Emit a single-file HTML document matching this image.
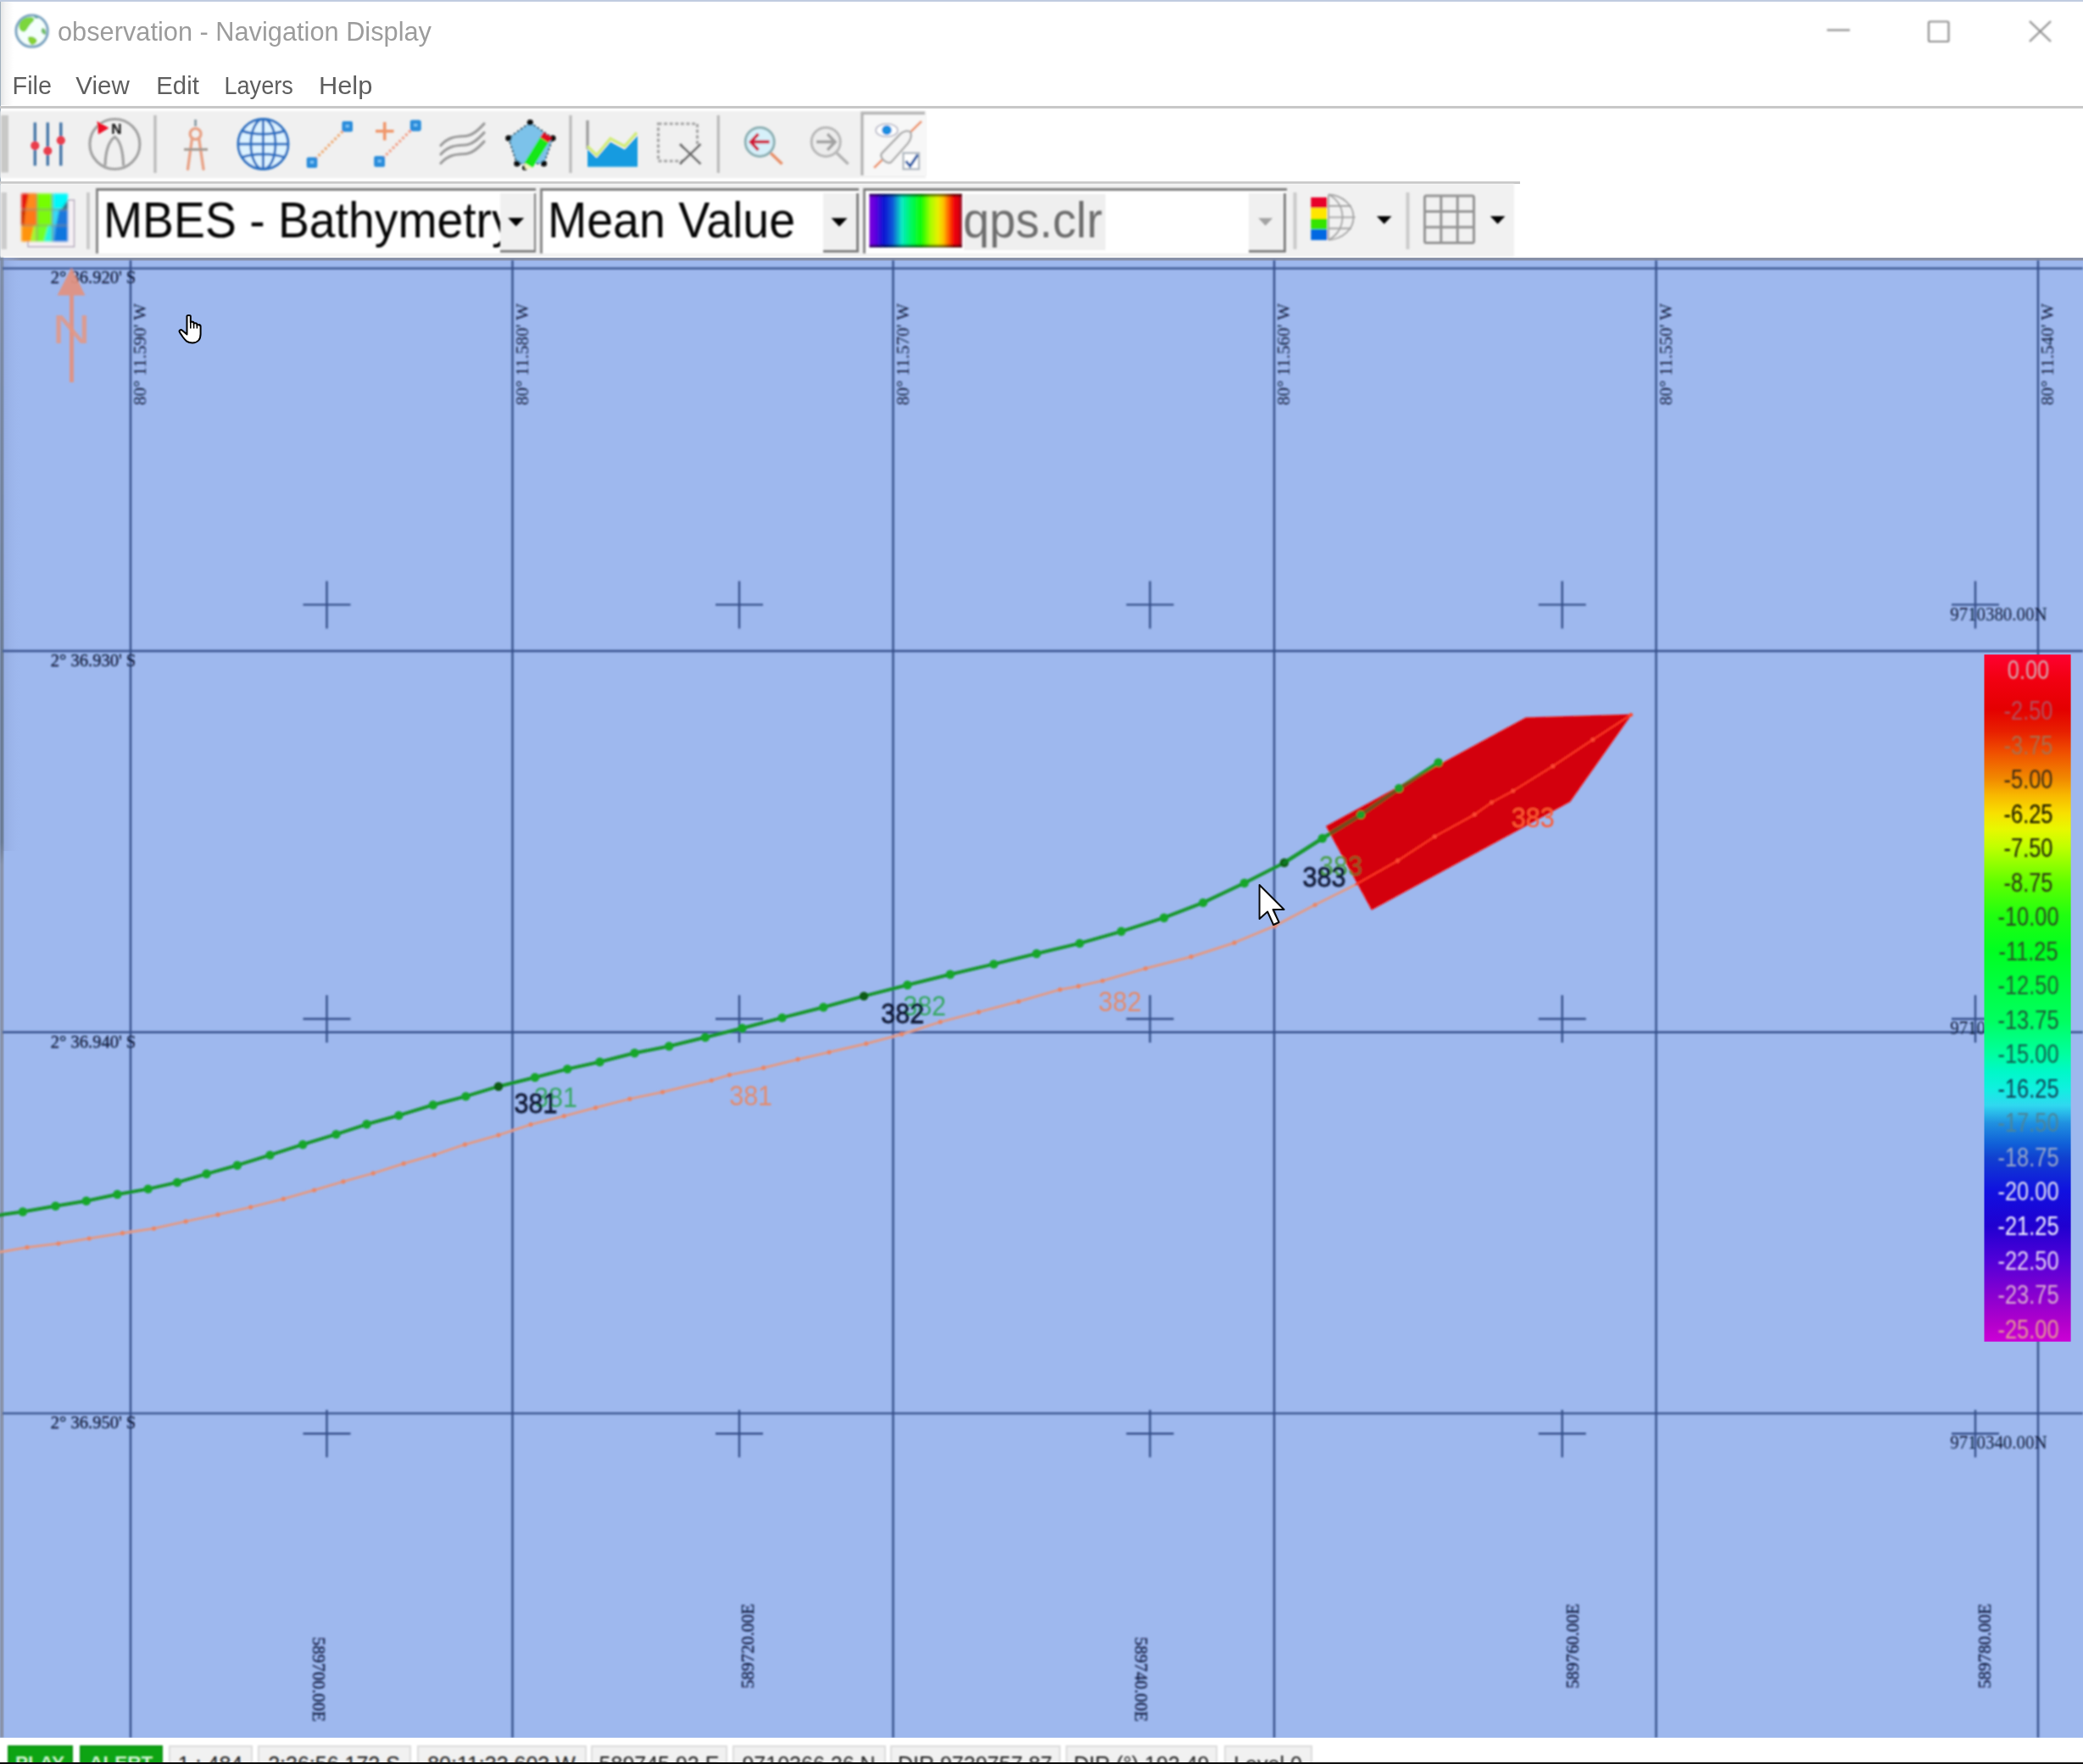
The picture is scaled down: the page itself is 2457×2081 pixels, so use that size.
<!DOCTYPE html>
<html lang="en"><head><meta charset="utf-8"><title>observation - Navigation Display</title>
<style>
html,body{margin:0;padding:0;background:#fff;}
body{width:2457px;height:2081px;font-family:"Liberation Sans",sans-serif;}
#root{position:relative;width:2457px;height:2081px;overflow:hidden;background:#fff;}
.abs{position:absolute;}
svg.map{position:absolute;left:0;top:0;}
svg.icons{position:absolute;left:0;top:0;}
.t{position:absolute;white-space:nowrap;line-height:1;}
.blur{filter:blur(0.8px);}
.tb{position:absolute;background:#f0f0f0;}
.hl{position:absolute;background:#c8c8c8;}
.dd{position:absolute;top:221.5px;height:77px;background:#fff;box-sizing:border-box;border-top:3.4px solid #7c7c7c;border-left:3.4px solid #888;overflow:hidden;}
.dd .btn{position:absolute;top:3px;height:67.5px;background:#f0f0f0;border-right:3.2px solid #808080;border-bottom:3.2px solid #808080;}
.dd .tx{position:absolute;left:6px;top:5.9px;font-size:60px;line-height:1;color:#050505;white-space:nowrap;transform:scaleX(0.922);transform-origin:0 0;}
.sb{position:absolute;left:0;top:2050px;width:2457px;height:31px;background:#fff;overflow:hidden;}
.cell{position:absolute;top:8.6px;height:30px;box-sizing:border-box;background:#f1f1f1;border:2px solid #dcdcdc;font-size:25px;line-height:41px;text-align:center;color:#1c1c1c;overflow:hidden;white-space:nowrap;}
.cell.g{top:9.3px;background:#0da413;border-color:#0a9410;color:#d0f2d0;font-weight:bold;font-size:22.5px;line-height:37px;}
</style></head><body><div id="root">
<div class="abs" style="left:0;top:0;width:16px;height:124px;background:linear-gradient(90deg,#e2e4e4,#f4f4f4 40%,#ffffff)"></div>
<div class="abs" style="left:0;top:0;width:1.3px;height:305px;background:#9eaebc"></div>
<div class="abs" style="left:0;top:0;width:2457px;height:1.5px;background:#c0cce0"></div>
<div class="hl" style="left:0;top:124.5px;width:2457px;height:3px;"></div>
<div class="tb blur" style="left:0;top:130.5px;width:1092px;height:79px;"></div>
<div class="hl" style="left:0;top:213.8px;width:1793px;height:3px;"></div>
<div class="tb blur" style="left:0;top:217.2px;width:1786px;height:86px;background:#f1f1f1"></div>
<svg class="icons" width="2457" height="130" viewBox="0 0 2457 130" style="filter:blur(0.7px)">
<text x="68" y="47.6" font-family="'Liberation Sans', sans-serif" font-size="30.5" fill="#9c9c9c" textLength="441" lengthAdjust="spacingAndGlyphs">observation - Navigation Display</text>
<g font-family="'Liberation Sans', sans-serif" font-size="29" fill="#5e5e5e">
<text x="14.5" y="111" textLength="46.5" lengthAdjust="spacingAndGlyphs">File</text>
<text x="89.3" y="111" textLength="63.5" lengthAdjust="spacingAndGlyphs">View</text>
<text x="184.3" y="111" textLength="50.5" lengthAdjust="spacingAndGlyphs">Edit</text>
<text x="264.4" y="111" textLength="81.5" lengthAdjust="spacingAndGlyphs">Layers</text>
<text x="375.9" y="111" textLength="63.5" lengthAdjust="spacingAndGlyphs">Help</text>
</g></svg>
<div class="dd blur" style="left:113.3px;width:519px;"><div class="tx" style="">MBES - Bathymetry</div><div class="btn" style="left:473.5px;width:40px;"></div></div>
<div class="dd blur" style="left:637px;width:376px;"><div class="tx" style="transform:scaleX(0.925)">Mean Value</div><div class="btn" style="left:331px;width:38.5px;"></div></div>
<div class="dd blur" style="left:1018px;width:499.5px;"><div class="abs" style="left:116px;top:4px;width:167px;height:66px;background:#efefef"></div><div class="tx" style="left:114.5px;color:#6e6e6e;transform:scaleX(0.93)">qps.clr</div><div class="btn" style="left:452px;width:41px;"></div></div>
<svg class="icons" width="2457" height="310" viewBox="0 0 2457 310">
<defs>
<linearGradient id="sw" x1="0" y1="0" x2="1" y2="0">
<stop offset="0" stop-color="#7a00d8"/>
<stop offset="0.06" stop-color="#6200e0"/>
<stop offset="0.16" stop-color="#0a18d2"/>
<stop offset="0.25" stop-color="#0a58d8"/>
<stop offset="0.35" stop-color="#08eac4"/>
<stop offset="0.45" stop-color="#00f860"/>
<stop offset="0.56" stop-color="#10fc08"/>
<stop offset="0.66" stop-color="#a8fc00"/>
<stop offset="0.74" stop-color="#e8f000"/>
<stop offset="0.8" stop-color="#ffc000"/>
<stop offset="0.86" stop-color="#ff5800"/>
<stop offset="0.91" stop-color="#f40808"/>
<stop offset="0.96" stop-color="#dc0010"/>
<stop offset="1" stop-color="#8a1030"/>
</linearGradient>
<linearGradient id="swv" x1="0" y1="0" x2="0" y2="1"><stop offset="0" stop-color="#000" stop-opacity="0.75"/><stop offset="0.07" stop-color="#000" stop-opacity="0"/><stop offset="0.93" stop-color="#000" stop-opacity="0"/><stop offset="1" stop-color="#000" stop-opacity="0.75"/></linearGradient>
<linearGradient id="cg" x1="0" y1="0" x2="1" y2="0.25"><stop offset="0" stop-color="#f01800"/><stop offset="0.16" stop-color="#ff7a00"/><stop offset="0.3" stop-color="#b0f000"/><stop offset="0.45" stop-color="#60ff00"/><stop offset="0.62" stop-color="#20f0c0"/><stop offset="0.75" stop-color="#10c8f0"/><stop offset="0.88" stop-color="#1070e0"/><stop offset="1" stop-color="#1060d0"/></linearGradient>
<filter id="s2" x="-10%" y="-10%" width="120%" height="120%"><feGaussianBlur stdDeviation="0.8"/></filter>
<filter id="s3" x="-10%" y="-10%" width="120%" height="120%"><feGaussianBlur stdDeviation="1.3"/></filter>
</defs>
<g filter="url(#s2)">
<circle cx="37.6" cy="36.6" r="18.6" fill="#f4fffc" stroke="#7ea6c2" stroke-width="3.2"/>
<path d="M22.5 30 C23.5 23.5 30 19.5 37.5 20.5 C41 21 41 24 38.5 26 C35.5 28.5 33.5 31.5 31.5 35 C30 37.5 27.5 38.5 25 36.5 C23 35 22.3 32.5 22.5 30 Z" fill="#7cd63e"/>
<path d="M33 44 C36 42 41 43.5 43.5 47 C44 50 41 52.5 37.5 53 C34.5 51 32.5 47.5 33 44 Z" fill="#86d236"/>
<path d="M49.5 33 C53 33 55 36.5 54 40.5 C52 41.5 49 39.5 48.5 36.5 Z" fill="#74c070"/>
<path d="M39.5 19.5 C42.5 18.5 45 20 45 21.5 C43.5 22.5 41 22 39.5 19.5 Z" fill="#5aa896"/>
<g stroke="#8e8e8e" stroke-width="2.2" fill="none">
<path d="M2155 35.5H2182"/>
<rect x="2275" y="25.5" width="23.5" height="23.5" rx="1.5"/>
<path d="M2394 25 L2419 49 M2419 25 L2394 49"/>
</g>
<rect x="1.3" y="136" width="8.6" height="67.5" fill="#c8c8c6"/>
<rect x="1.5" y="227" width="6.5" height="67" fill="#cccccc"/>
<rect x="181.4" y="136" width="3.2" height="68" fill="#b9b9b9"/>
<rect x="671.4" y="136" width="3.2" height="68" fill="#b9b9b9"/>
<rect x="845.6999999999999" y="136" width="3.2" height="68" fill="#b9b9b9"/>
<g stroke="#4677a8" stroke-width="3.5" fill="none"><path d="M41.3 144.5V195.5M56.3 144.5V195.5M71.8 144.5V195.5"/></g>
<g fill="#ea3c4c"><circle cx="41.3" cy="171.8" r="5.1"/><circle cx="56.3" cy="178" r="5.1"/><circle cx="71.8" cy="165.6" r="5.1"/></g>
<circle cx="135.4" cy="170" r="29.5" fill="none" stroke="#a2a2a2" stroke-width="3.2"/>
<path d="M124 195.5 C124.5 176 129 166 135.4 161.5 C142 166 145 176 145.6 195.5" fill="none" stroke="#a2a2a2" stroke-width="3.2"/>
<path d="M114.5 143 L128.5 151 L116 158.5 Z" fill="#ee1028"/>
<text x="137.5" y="158" text-anchor="middle" font-family="'Liberation Sans', sans-serif" font-weight="bold" font-size="17" fill="#0a0a0a">N</text>
<path d="M230.6 141V149" stroke="#8fa0a8" stroke-width="3" fill="none"/>
<g stroke="#e8a286" stroke-width="3.4" fill="none" stroke-linecap="round" stroke-linejoin="round"><circle cx="230.6" cy="158" r="6.4"/><path d="M226.5 163.5 L221.5 199.5 M234.7 163.5 L240 199.5"/></g>
<path d="M217 176.3H245" stroke="#a39a92" stroke-width="3" fill="none"/>
<g stroke="#2f72c2" stroke-width="3" fill="none"><circle cx="310.4" cy="170" r="29.5" fill="#dcf2ff"/><ellipse cx="310.4" cy="170" rx="14.5" ry="29.5"/><path d="M310.4 140.5V199.5M281 170H340M285.5 154.5C300 159.5 320 159.5 335.5 154.5M285.5 185.5C300 180.5 320 180.5 335.5 185.5"/></g>
<path d="M368 191.6 L409.6 149.5" stroke="#f0ae78" stroke-width="3.4" stroke-dasharray="3 2.4" fill="none"/>
<rect x="361.7" y="185.5" width="12.6" height="12.6" rx="2" fill="#2b8ddb"/><rect x="366" y="189.8" width="4" height="3" fill="#7fc8f8"/>
<rect x="403.4" y="143.0" width="12.6" height="12.6" rx="2" fill="#2b8ddb"/><rect x="407.7" y="147.3" width="4" height="3" fill="#7fc8f8"/>
<rect x="441.4" y="184.2" width="12.6" height="12.6" rx="2" fill="#2b8ddb"/><rect x="445.7" y="188.5" width="4" height="3" fill="#7fc8f8"/>
<rect x="483.9" y="141.79999999999998" width="12.6" height="12.6" rx="2" fill="#2b8ddb"/><rect x="488.2" y="146.1" width="4" height="3" fill="#7fc8f8"/>
<path d="M447.7 190.5 L490.2 148.1" stroke="#f3a48c" stroke-width="3.4" stroke-dasharray="3 2.4" fill="none"/>
<rect x="441.4" y="184.2" width="12.6" height="12.6" rx="2" fill="#2b8ddb"/><rect x="445.7" y="188.5" width="4" height="3" fill="#7fc8f8"/>
<rect x="483.9" y="141.79999999999998" width="12.6" height="12.6" rx="2" fill="#2b8ddb"/><rect x="488.2" y="146.1" width="4" height="3" fill="#7fc8f8"/>
<path d="M443 154.7H464.5M453.7 144V165.5" stroke="#f0966a" stroke-width="3.6" fill="none"/>
<g stroke="#9c9c9c" stroke-width="3.2" fill="none" stroke-linecap="round">
<path d="M520 171.5 C532 158 545 162 552 160 C560 158 565 152 571 146"/>
<path d="M520 182.0 C532 168.5 545 172.5 552 170.5 C560 168.5 565 162.5 571 156.5"/>
<path d="M520 192.5 C532 179 545 183 552 181 C560 179 565 173 571 167"/>
</g>
<polygon points="625.3,144.5 652,163 641.5,193 609.8,193 599.8,163" fill="#7cc2ea" stroke="#123040" stroke-width="1.6" stroke-dasharray="3 2"/>
<g fill="#0a0a0a"><circle cx="625.3" cy="144.5" r="3.6"/><circle cx="652" cy="163" r="3.6"/><circle cx="641.5" cy="193" r="3.6"/><circle cx="609.8" cy="193" r="3.6"/><circle cx="599.8" cy="163" r="3.6"/><circle cx="619" cy="198" r="3"/></g>
<path d="M618.5 192 L637 162 L647 168.5 L628 198 Z" fill="#12e812"/>
<path d="M637 162 L641 156 L651 162.5 L647 168.5 Z" fill="#e01020"/>
<path d="M618.5 192 L628 198 L619.5 199.5 Z" fill="#f4f4c0"/>
<path d="M693 142V176" stroke="#9a9a9a" stroke-width="3.2" fill="none"/>
<path d="M693 176 L703.7 186.5 L720 167.5 L736.8 176.5 L752 160 L752 196.8 L693 196.8 Z" fill="#129be0"/>
<path d="M693 172.5 L703.7 183 L720 163.5 L736.8 172.5 L751 156.5" stroke="#d2ec7a" stroke-width="3.4" fill="none"/>
<rect x="776.5" y="146" width="46" height="44" fill="none" stroke="#a6a6a6" stroke-width="3.2" stroke-dasharray="4 2.6"/>
<rect x="806" y="172" width="22" height="22" fill="#f0f0f0"/>
<path d="M802 170 L826.5 193.5 M826.5 170 L802 193.5" stroke="#6e6e6e" stroke-width="3" fill="none"/>
<path d="M909 180.5 L922.5 193.5" stroke="#e8926c" stroke-width="3.6" fill="none"/>
<circle cx="896.2" cy="167.4" r="17" fill="#d6f0fa" stroke="#8db0b4" stroke-width="3"/>
<path d="M907.5 167.4H887M894.5 158 L885.5 167.4 L894.5 177" stroke="#d01838" stroke-width="3.6" fill="none"/>
<path d="M987 180.5 L1000.5 193.5" stroke="#b2b2b2" stroke-width="3.4" fill="none"/>
<circle cx="974.2" cy="167.4" r="17" fill="#ececec" stroke="#b8b8b8" stroke-width="3"/>
<path d="M963 167.4H984M976 158 L985 167.4 L976 177" stroke="#a2a2a2" stroke-width="3.6" fill="none"/>
<rect x="1015.5" y="131.5" width="77" height="76" fill="#f7f7f7"/>
<path d="M1017 207 V133.5 H1091" stroke="#b4b4b4" stroke-width="3.4" fill="none"/>
<path d="M1031 198 L1087 143" stroke="#ee9a72" stroke-width="3" fill="none"/>
<ellipse cx="1046" cy="153.7" rx="13" ry="7.6" fill="#fff" stroke="#c4c4d0" stroke-width="2"/>
<circle cx="1046" cy="153.5" r="5.8" fill="#1c8ee0"/>
<path d="M1040 181 L1062 158 C1066 155 1071 153.5 1074 156 C1076 161 1074 165 1071 169 L1051 191.5 C1048 193 1046 192 1043.5 190 C1040 187 1038 184 1040 181 Z" fill="#f4f4f4" stroke="#b0b0b0" stroke-width="2.6"/>
<rect x="1065.5" y="180.5" width="18.5" height="19" fill="#fff" stroke="#b0b8c0" stroke-width="2.4"/>
<path d="M1068.5 190 L1073.5 196 L1082.5 182.5" stroke="#2a5ea8" stroke-width="3.2" fill="none"/>
<rect x="33" y="236" width="54.5" height="55" fill="#f6f0f4" stroke="#b8b0c0" stroke-width="1.6"/>
<g filter="url(#s3)">
<rect x="25.3" y="228.4" width="18.3" height="18.9" fill="#e41408"/>
<rect x="43.5" y="228.4" width="18.3" height="18.9" fill="#74ff00"/>
<rect x="61.7" y="228.4" width="18.3" height="18.9" fill="#06f8fa"/>
<rect x="25.3" y="247.2" width="18.3" height="18.9" fill="#ff7818"/>
<rect x="43.5" y="247.2" width="18.3" height="18.9" fill="#7cfa10"/>
<rect x="61.7" y="247.2" width="18.3" height="18.9" fill="#1a78dc"/>
<rect x="25.3" y="266.0" width="18.3" height="18.9" fill="#ff9408"/>
<rect x="43.5" y="266.0" width="18.3" height="18.9" fill="#72ff28"/>
<rect x="61.7" y="266.0" width="18.3" height="18.9" fill="#0c76de"/>
<path d="M34 228.4 L43.5 228.4 L43.5 247.2 L30 247.2 Z" fill="#ff8a1c"/>
<path d="M25.3 247.2 L30 247.2 L28 266 L25.3 266 Z" fill="#c42400"/>
<path d="M36 284.8 L40 266 L43.5 266 L43.5 284.8 Z" fill="#a0fa30"/>
<path d="M61.7 247.2 L70 247.2 L66 266 L61.7 266 Z" fill="#34dcf8"/>
<path d="M52 284.8 L57 266 L61.7 266 L61.7 284.8 Z" fill="#22f8e0"/>
<path d="M61.7 266 L66 266 L63.5 284.8 L61.7 284.8 Z" fill="#40b8f0"/>
<path d="M72 247.2 L79.9 236 L79.9 247.2 Z" fill="#2a6a88"/>
<g stroke="#8c8c78" stroke-opacity="0.55" stroke-width="2.2"><path d="M25.3 247.2H79.9M25.3 266H79.9M43.5 228.4V284.8M61.7 228.4V284.8"/></g>
</g>
<rect x="102" y="227" width="4" height="67" fill="#cacaca"/>
<rect x="1525.5" y="227" width="4" height="67" fill="#cacaca"/>
<rect x="1658.5" y="227" width="4" height="67" fill="#cacaca"/>
<path d="M599.2 257.0 L618.2 257.0 L608.7 267.0 Z" fill="#000"/>
<path d="M980.5 257.3 L999.5 257.3 L990 267.3 Z" fill="#000"/>
<path d="M1484.2 257.3 L1501.2 257.3 L1492.7 266.3 Z" fill="#a2a2a2"/>
<path d="M1623.9 254.90000000000003 L1641.5 254.90000000000003 L1632.7 264.3 Z" fill="#000"/>
<path d="M1757.8 254.90000000000003 L1775.3999999999999 254.90000000000003 L1766.6 264.3 Z" fill="#000"/>
<rect x="1025.5" y="228.8" width="109.2" height="63" fill="url(#sw)"/>
<rect x="1025.5" y="228.8" width="109.2" height="63" fill="url(#swv)"/>
<g stroke="#a4a4a4" stroke-width="1.8" fill="none"><path d="M1567 229.5 A31.5 26.8 0 0 1 1567 283 "/><path d="M1567 229.5 C1589 240 1589 272 1567 283"/><path d="M1567 243H1594M1567 256.3H1598.5M1567 269.5H1594M1567 229.5V283"/></g>
<rect x="1546.3" y="232.8" width="19" height="12.6" fill="#e8002c"/>
<rect x="1546.3" y="245.4" width="19" height="12.6" fill="#ffe600"/>
<rect x="1546.3" y="258.0" width="19" height="12.6" fill="#36e400"/>
<rect x="1546.3" y="270.6" width="19" height="12.6" fill="#0068e2"/>
<g stroke="#949494" stroke-width="3" fill="none"><rect x="1680.5" y="231" width="58" height="55.5" rx="2"/><path d="M1699.8 231V286.5M1719.2 231V286.5M1680.5 249.5H1738.5M1680.5 268H1738.5"/></g>
</g>
</svg>
<svg class="map" width="2457" height="2081" viewBox="0 0 2457 2081">
<defs>
<linearGradient id="lg" x1="0" y1="0" x2="0" y2="1">
<stop offset="0" stop-color="#ff0030"/>
<stop offset="0.035" stop-color="#f20012"/>
<stop offset="0.08" stop-color="#e40000"/>
<stop offset="0.1125" stop-color="#e82000"/>
<stop offset="0.143" stop-color="#f05000"/>
<stop offset="0.18" stop-color="#f18800"/>
<stop offset="0.205" stop-color="#f8b800"/>
<stop offset="0.231" stop-color="#f8e000"/>
<stop offset="0.254" stop-color="#e8f800"/>
<stop offset="0.28" stop-color="#c0ff00"/>
<stop offset="0.331" stop-color="#60ff00"/>
<stop offset="0.38" stop-color="#20ff10"/>
<stop offset="0.43" stop-color="#00ff20"/>
<stop offset="0.48" stop-color="#00ff40"/>
<stop offset="0.533" stop-color="#00ff60"/>
<stop offset="0.582" stop-color="#00ffa0"/>
<stop offset="0.607" stop-color="#00f8c8"/>
<stop offset="0.632" stop-color="#10f0e0"/>
<stop offset="0.656" stop-color="#30d8f0"/>
<stop offset="0.682" stop-color="#2090e0"/>
<stop offset="0.712" stop-color="#1060d8"/>
<stop offset="0.733" stop-color="#1040d0"/>
<stop offset="0.781" stop-color="#1010e0"/>
<stop offset="0.832" stop-color="#2000d0"/>
<stop offset="0.881" stop-color="#5000d8"/>
<stop offset="0.932" stop-color="#8800d0"/>
<stop offset="0.975" stop-color="#b400cc"/>
<stop offset="1" stop-color="#cc00d6"/>
</linearGradient>
<filter id="soft" x="-5%" y="-5%" width="110%" height="110%"><feGaussianBlur stdDeviation="0.9"/></filter>
</defs>
<rect x="0" y="304" width="2457" height="1746" fill="#9eb8ee"/>
<rect x="0" y="304" width="2457" height="3.4" fill="#8790a8"/>
<linearGradient id="ls" gradientUnits="userSpaceOnUse" x1="0" y1="304" x2="0" y2="2050"><stop offset="0" stop-color="#7c8aa2"/><stop offset="0.3" stop-color="#66768c"/><stop offset="0.395" stop-color="#66768c"/><stop offset="0.41" stop-color="#858fa4"/><stop offset="1" stop-color="#8790a4"/></linearGradient>
<linearGradient id="ls2" x1="0" y1="0" x2="1" y2="0"><stop offset="0" stop-color="#8ea4d8" stop-opacity="0.7"/><stop offset="1" stop-color="#9eb8ee" stop-opacity="0"/></linearGradient>
<rect x="3" y="304" width="22" height="700" fill="url(#ls2)"/>
<rect x="0" y="304" width="4.2" height="1746" fill="url(#ls)" filter="url(#soft)"/>
<g filter="url(#soft)">
<g stroke="#36508a" stroke-width="2.4" fill="none">
<line x1="154" y1="307" x2="154" y2="2050"/>
<line x1="604.5" y1="307" x2="604.5" y2="2050"/>
<line x1="1053.5" y1="307" x2="1053.5" y2="2050"/>
<line x1="1503" y1="307" x2="1503" y2="2050"/>
<line x1="1953.5" y1="307" x2="1953.5" y2="2050"/>
<line x1="2404" y1="307" x2="2404" y2="2050"/>
<line x1="3" y1="316.6" x2="2457" y2="316.6"/>
<line x1="3" y1="768" x2="2457" y2="768"/>
<line x1="3" y1="1217.7" x2="2457" y2="1217.7"/>
<line x1="3" y1="1667.4" x2="2457" y2="1667.4"/>
</g>
<g stroke="#36508a" stroke-width="2.4" fill="none">
<path d="M357.5 713.4H413.5M385.5 685.4V741.4"/>
<path d="M357.5 1202H413.5M385.5 1174V1230"/>
<path d="M357.5 1691.2H413.5M385.5 1663.2V1719.2"/>
<path d="M844 713.4H900M872 685.4V741.4"/>
<path d="M844 1202H900M872 1174V1230"/>
<path d="M844 1691.2H900M872 1663.2V1719.2"/>
<path d="M1328.5 713.4H1384.5M1356.5 685.4V741.4"/>
<path d="M1328.5 1202H1384.5M1356.5 1174V1230"/>
<path d="M1328.5 1691.2H1384.5M1356.5 1663.2V1719.2"/>
<path d="M1814.7 713.4H1870.7M1842.7 685.4V741.4"/>
<path d="M1814.7 1202H1870.7M1842.7 1174V1230"/>
<path d="M1814.7 1691.2H1870.7M1842.7 1663.2V1719.2"/>
<path d="M2302 713.4H2358M2330 685.4V741.4"/>
<path d="M2302 1202H2358M2330 1174V1230"/>
<path d="M2302 1691.2H2358M2330 1663.2V1719.2"/>
</g>
<g font-family="'Liberation Serif', serif" font-size="20" fill="#0e1a38">
<text x="59.8" y="333.8" font-size="21" textLength="100.5" lengthAdjust="spacingAndGlyphs" stroke="#0e1a38" stroke-width="0.3">2° 36.920' S</text>
<text x="59.8" y="785.8" font-size="21" textLength="100.5" lengthAdjust="spacingAndGlyphs" stroke="#0e1a38" stroke-width="0.3">2° 36.930' S</text>
<text x="59.8" y="1235.6" font-size="21" textLength="100.5" lengthAdjust="spacingAndGlyphs" stroke="#0e1a38" stroke-width="0.3">2° 36.940' S</text>
<text x="59.8" y="1685" font-size="21" textLength="100.5" lengthAdjust="spacingAndGlyphs" stroke="#0e1a38" stroke-width="0.3">2° 36.950' S</text>
<text transform="translate(172,478) rotate(-90)" textLength="120" lengthAdjust="spacingAndGlyphs">80° 11.590' W</text>
<text transform="translate(622.5,478) rotate(-90)" textLength="120" lengthAdjust="spacingAndGlyphs">80° 11.580' W</text>
<text transform="translate(1071.5,478) rotate(-90)" textLength="120" lengthAdjust="spacingAndGlyphs">80° 11.570' W</text>
<text transform="translate(1521,478) rotate(-90)" textLength="120" lengthAdjust="spacingAndGlyphs">80° 11.560' W</text>
<text transform="translate(1971.5,478) rotate(-90)" textLength="120" lengthAdjust="spacingAndGlyphs">80° 11.550' W</text>
<text transform="translate(2422,478) rotate(-90)" textLength="120" lengthAdjust="spacingAndGlyphs">80° 11.540' W</text>
<text transform="translate(2300.2,731.5) scale(1,1.12)" font-size="21" textLength="114.3" lengthAdjust="spacingAndGlyphs">9710380.00N</text>
<text transform="translate(2300.2,1220) scale(1,1.12)" font-size="21" textLength="114.3" lengthAdjust="spacingAndGlyphs">9710360.00N</text>
<text transform="translate(2300.2,1709) scale(1,1.12)" font-size="21" textLength="114.3" lengthAdjust="spacingAndGlyphs">9710340.00N</text>
</g>
<g font-family="'Liberation Serif', serif" font-size="20" fill="#121e44" stroke="#121e44" stroke-width="0.35">
<text transform="translate(369,1931) rotate(90)" textLength="100" lengthAdjust="spacingAndGlyphs">589700.00E</text>
<text transform="translate(889,1992) rotate(-90)" textLength="100" lengthAdjust="spacingAndGlyphs">589720.00E</text>
<text transform="translate(1339,1931) rotate(90)" textLength="100" lengthAdjust="spacingAndGlyphs">589740.00E</text>
<text transform="translate(1862,1992) rotate(-90)" textLength="100" lengthAdjust="spacingAndGlyphs">589760.00E</text>
<text transform="translate(2348,1992) rotate(-90)" textLength="100" lengthAdjust="spacingAndGlyphs">589780.00E</text>
</g>
<g fill="#e3917f" stroke="none" opacity="0.92">
<path d="M84.3 316 L100.5 348.5 L87 348.5 L87 451 L82 451 L82 348.5 L67.5 348.5 Z"/>
</g>
<text transform="translate(84.3,405) scale(1.3,1)" text-anchor="middle" font-family="'Liberation Sans', sans-serif" font-size="49" fill="#e59783" fill-opacity="0.85">N</text>
<polyline points="-6.0,1478.0 5.0,1476.2 31.9,1471.5 68.9,1467.1 105.2,1461.1 144.5,1454.7 181.5,1449.3 219.1,1440.9 257.0,1432.9 295.7,1424.1 334.3,1414.4 370.6,1404.0 404.9,1393.9 440.2,1384.1 476.1,1372.7 512.4,1362.3 548.4,1350.2 588.0,1339.1 626.0,1326.6 665.3,1316.6 702.5,1306.8 742.8,1296.4 781.5,1288.3 839.2,1274.5 860.4,1268.1 900.7,1259.7 941.1,1249.7 978.0,1241.3 1021.7,1231.2 1063.7,1220.1 1109.1,1205.6 1154.4,1193.9 1201.5,1181.5 1250.3,1167.4 1272.1,1163.4 1300.5,1157.0 1351.2,1142.5 1405.0,1128.7 1456.0,1112.2 1504.1,1092.1 1551.1,1067.5 1598.2,1044.0" fill="none" stroke="#e39a86" stroke-width="3" stroke-linejoin="round"/>
<g fill="#ea8666">
<circle cx="31.9" cy="1471.5" r="2.6"/>
<circle cx="68.9" cy="1467.1" r="2.6"/>
<circle cx="105.2" cy="1461.1" r="2.6"/>
<circle cx="144.5" cy="1454.7" r="2.6"/>
<circle cx="181.5" cy="1449.3" r="2.6"/>
<circle cx="219.1" cy="1440.9" r="2.6"/>
<circle cx="257" cy="1432.9" r="2.6"/>
<circle cx="295.7" cy="1424.1" r="2.6"/>
<circle cx="334.3" cy="1414.4" r="2.6"/>
<circle cx="370.6" cy="1404" r="2.6"/>
<circle cx="404.9" cy="1393.9" r="2.6"/>
<circle cx="440.2" cy="1384.1" r="2.6"/>
<circle cx="476.1" cy="1372.7" r="2.6"/>
<circle cx="512.4" cy="1362.3" r="2.6"/>
<circle cx="548.4" cy="1350.2" r="2.6"/>
<circle cx="588" cy="1339.1" r="2.6"/>
<circle cx="626" cy="1326.6" r="2.6"/>
<circle cx="665.3" cy="1316.6" r="2.6"/>
<circle cx="702.5" cy="1306.8" r="2.6"/>
<circle cx="742.8" cy="1296.4" r="2.6"/>
<circle cx="781.5" cy="1288.3" r="2.6"/>
<circle cx="839.2" cy="1274.5" r="2.6"/>
<circle cx="860.4" cy="1268.1" r="2.6"/>
<circle cx="900.7" cy="1259.7" r="2.6"/>
<circle cx="941.1" cy="1249.7" r="2.6"/>
<circle cx="978" cy="1241.3" r="2.6"/>
<circle cx="1021.7" cy="1231.2" r="2.6"/>
<circle cx="1063.7" cy="1220.1" r="2.6"/>
<circle cx="1109.1" cy="1205.6" r="2.6"/>
<circle cx="1154.4" cy="1193.9" r="2.6"/>
<circle cx="1201.5" cy="1181.5" r="2.6"/>
<circle cx="1250.3" cy="1167.4" r="2.6"/>
<circle cx="1272.1" cy="1163.4" r="2.6"/>
<circle cx="1300.5" cy="1157" r="2.6"/>
<circle cx="1351.2" cy="1142.5" r="2.6"/>
<circle cx="1405" cy="1128.7" r="2.6"/>
<circle cx="1456" cy="1112.2" r="2.6"/>
<circle cx="1504.1" cy="1092.1" r="2.6"/>
<circle cx="1551.1" cy="1067.5" r="2.6"/>
</g>
<g font-family="'Liberation Sans', sans-serif" font-size="30.5" text-anchor="middle">
<text transform="translate(655.4,1305.8) scale(1,1.08)" fill="#35a862">381</text>
<text transform="translate(1090.6,1197.6) scale(1,1.08)" fill="#35a862">382</text>
<text transform="translate(1581.4,1033.3) scale(1,1.08)" fill="#35a862">383</text>
<text transform="translate(885.6,1304.1) scale(1,1.08)" fill="#e58a6c">381</text>
<text transform="translate(1321,1192.8999999999999) scale(1,1.08)" fill="#e58a6c">382</text>
</g>
<polyline points="-6.0,1435.0 5.0,1432.5 26.9,1429.5 65.5,1422.8 101.8,1416.7 138.4,1409.0 174.7,1402.6 209.0,1394.9 243.6,1384.8 279.9,1374.7 318.5,1362.6 357.2,1350.2 396.5,1338.1 432.5,1326.3 470.4,1315.9 510.8,1303.5 549.4,1293.4 588.0,1281.7 631.0,1271.0 669.3,1261.1 707.5,1252.7 748.5,1242.3 789.2,1234.2 831.9,1223.8 875.5,1213.0 922.6,1200.6 971.3,1188.2 1019.0,1175.1 1070.4,1162.0 1120.8,1149.5 1172.2,1137.4 1222.7,1125.0 1273.5,1112.9 1322.6,1098.8 1373.0,1082.7 1419.1,1064.9 1467.8,1041.7 1514.9,1017.7 1559.8,989.0 1605.2,961.3 1650.2,930.2 1696.7,899.7" fill="none" stroke="#12962a" stroke-width="4" stroke-linejoin="round" stroke-linecap="round"/>
<circle cx="26.9" cy="1429.5" r="5.2" fill="#12a62c"/>
<circle cx="65.5" cy="1422.8" r="5.2" fill="#12a62c"/>
<circle cx="101.8" cy="1416.7" r="5.2" fill="#12a62c"/>
<circle cx="138.4" cy="1409" r="5.2" fill="#12a62c"/>
<circle cx="174.7" cy="1402.6" r="5.2" fill="#12a62c"/>
<circle cx="209" cy="1394.9" r="5.2" fill="#12a62c"/>
<circle cx="243.6" cy="1384.8" r="5.2" fill="#12a62c"/>
<circle cx="279.9" cy="1374.7" r="5.2" fill="#12a62c"/>
<circle cx="318.5" cy="1362.6" r="5.2" fill="#12a62c"/>
<circle cx="357.2" cy="1350.2" r="5.2" fill="#12a62c"/>
<circle cx="396.5" cy="1338.1" r="5.2" fill="#12a62c"/>
<circle cx="432.5" cy="1326.3" r="5.2" fill="#12a62c"/>
<circle cx="470.4" cy="1315.9" r="5.2" fill="#12a62c"/>
<circle cx="510.8" cy="1303.5" r="5.2" fill="#12a62c"/>
<circle cx="549.4" cy="1293.4" r="5.2" fill="#12a62c"/>
<circle cx="588" cy="1281.7" r="5.2" fill="#0b5c14"/>
<circle cx="631" cy="1271" r="5.2" fill="#12a62c"/>
<circle cx="669.3" cy="1261.1" r="5.2" fill="#12a62c"/>
<circle cx="707.5" cy="1252.7" r="5.2" fill="#12a62c"/>
<circle cx="748.5" cy="1242.3" r="5.2" fill="#12a62c"/>
<circle cx="789.2" cy="1234.2" r="5.2" fill="#12a62c"/>
<circle cx="831.9" cy="1223.8" r="5.2" fill="#12a62c"/>
<circle cx="875.5" cy="1213" r="5.2" fill="#12a62c"/>
<circle cx="922.6" cy="1200.6" r="5.2" fill="#12a62c"/>
<circle cx="971.3" cy="1188.2" r="5.2" fill="#12a62c"/>
<circle cx="1019" cy="1175.1" r="5.2" fill="#0b5c14"/>
<circle cx="1070.4" cy="1162" r="5.2" fill="#12a62c"/>
<circle cx="1120.8" cy="1149.5" r="5.2" fill="#12a62c"/>
<circle cx="1172.2" cy="1137.4" r="5.2" fill="#12a62c"/>
<circle cx="1222.7" cy="1125" r="5.2" fill="#12a62c"/>
<circle cx="1273.5" cy="1112.9" r="5.2" fill="#12a62c"/>
<circle cx="1322.6" cy="1098.8" r="5.2" fill="#12a62c"/>
<circle cx="1373" cy="1082.7" r="5.2" fill="#12a62c"/>
<circle cx="1419.1" cy="1064.9" r="5.2" fill="#12a62c"/>
<circle cx="1467.8" cy="1041.7" r="5.2" fill="#12a62c"/>
<circle cx="1514.9" cy="1017.7" r="5.2" fill="#0b5c14"/>
<circle cx="1559.8" cy="989" r="5.2" fill="#12a62c"/>
<circle cx="1605.2" cy="961.3" r="5.2" fill="#12a62c"/>
<circle cx="1650.2" cy="930.2" r="5.2" fill="#12a62c"/>
<circle cx="1696.7" cy="899.7" r="5.2" fill="#12a62c"/>
<polygon points="1564.8,974.8 1800.0,846.9 1923.7,843.3 1851.7,945.5 1618.1,1072.8" fill="#d3000c" stroke="#ee1018" stroke-width="1.5"/>
<polyline points="1514.9,1017.7 1559.8,989.0 1605.2,961.3 1650.2,930.2 1696.7,899.7" fill="none" stroke="#129a2c" stroke-width="4.6" stroke-linecap="round" opacity="0.5"/>
<circle cx="1605.2" cy="961.3" r="5" fill="#12a82c" opacity="0.92"/>
<circle cx="1650.2" cy="930.2" r="5" fill="#12a82c" opacity="0.92"/>
<circle cx="1696.7" cy="899.7" r="5" fill="#12a82c" opacity="0.92"/>
<polyline points="1598.2,1044.0 1648.6,1015.5 1692.3,986.9 1739.3,961.0 1759.5,946.6 1784.7,933.1 1831.7,903.9 1878.8,872.6 1923.7,843.3" fill="none" stroke="#ff3626" stroke-width="2.2"/>
<g fill="#ff4a34">
<circle cx="1648.6" cy="1015.5" r="2.4"/>
<circle cx="1692.3" cy="986.9" r="2.4"/>
<circle cx="1739.3" cy="961" r="2.4"/>
<circle cx="1759.5" cy="946.6" r="2.4"/>
<circle cx="1784.7" cy="933.1" r="2.4"/>
<circle cx="1831.7" cy="903.9" r="2.4"/>
<circle cx="1878.8" cy="872.6" r="2.4"/>
<circle cx="1923.7" cy="843.3" r="2.4"/>
</g>
<g font-family="'Liberation Sans', sans-serif" font-size="30.5" text-anchor="middle">
<text transform="translate(1808.2,976.2) scale(1,1.08)" fill="#ff5a34">383</text>
<text transform="translate(1581.4,1033.3) scale(1,1.08)" fill="#5a9a3a" fill-opacity="0.6">383</text>
<text transform="translate(632,1312.5) scale(1,1.08)" fill="#0c1836" stroke="#0c1836" stroke-width="0.7">381</text>
<text transform="translate(1064.7,1206.7) scale(1,1.08)" fill="#0c1836" stroke="#0c1836" stroke-width="0.7">382</text>
<text transform="translate(1561.9,1045.7) scale(1,1.08)" fill="#0c1836" stroke="#0c1836" stroke-width="0.7">383</text>
</g>
</g>
<rect x="2340.5" y="772.2" width="102.1" height="810.5" fill="url(#lg)"/>
<g font-family="'Liberation Sans', sans-serif" font-size="31" text-anchor="middle" filter="url(#soft)">
<text transform="translate(2392.5,800.8) scale(0.82,1)" fill="#d6aab0">0.00</text>
<text transform="translate(2392.5,849.3) scale(0.82,1)" fill="#b4505c">-2.50</text>
<text transform="translate(2392.5,889.8) scale(0.82,1)" fill="#a8704e">-3.75</text>
<text transform="translate(2392.5,930.3) scale(0.82,1)" fill="#3c2c18">-5.00</text>
<text transform="translate(2392.5,970.8) scale(0.82,1)" fill="#0c0c00">-6.25</text>
<text transform="translate(2392.5,1011.3) scale(0.82,1)" fill="#1a1c08">-7.50</text>
<text transform="translate(2392.5,1051.8) scale(0.82,1)" fill="#2a3018">-8.75</text>
<text transform="translate(2392.5,1092.4) scale(0.82,1)" fill="#2c4420">-10.00</text>
<text transform="translate(2392.5,1132.9) scale(0.82,1)" fill="#2a5028">-11.25</text>
<text transform="translate(2392.5,1173.4) scale(0.82,1)" fill="#226030">-12.50</text>
<text transform="translate(2392.5,1213.9) scale(0.82,1)" fill="#1c5a38">-13.75</text>
<text transform="translate(2392.5,1254.4) scale(0.82,1)" fill="#106050">-15.00</text>
<text transform="translate(2392.5,1294.9) scale(0.82,1)" fill="#0c4458">-16.25</text>
<text transform="translate(2392.5,1335.4) scale(0.82,1)" fill="#4c8498">-17.50</text>
<text transform="translate(2392.5,1375.9) scale(0.82,1)" fill="#98a8c8">-18.75</text>
<text transform="translate(2392.5,1416.4) scale(0.82,1)" fill="#e4e4f4">-20.00</text>
<text transform="translate(2392.5,1457.0) scale(0.82,1)" fill="#f2f2ff">-21.25</text>
<text transform="translate(2392.5,1497.5) scale(0.82,1)" fill="#e4d4f2">-22.50</text>
<text transform="translate(2392.5,1538.0) scale(0.82,1)" fill="#d8acd0">-23.75</text>
<text transform="translate(2392.5,1578.5) scale(0.82,1)" fill="#e29a94">-25.00</text>
</g>
<g transform="translate(1485.6,1044)"><path d="M0 0 L0 40 L9.5 31.5 L16.5 47 L23 44 L16 29 L29 29 Z" fill="#fff" stroke="#0a0a0a" stroke-width="2" stroke-linejoin="round"/></g>
<g transform="translate(211,371.5)"><path d="M9.5 1.5 C9.5 0 13.8 0 13.8 1.5 L13.8 9 C13.8 7.6 17.6 7.6 17.6 9.4 L17.6 10.6 C17.6 9.2 21.4 9.4 21.4 11 L21.4 12.2 C21.4 11 25.6 11.2 25.6 13.4 L25.6 22.5 C25.6 29 22 33 16 33 C10 33 7.6 30 5 26.5 L1 20.6 C-0.3 18.6 2 16.6 4.2 18.4 L9.5 23 Z" fill="#fff" stroke="#000" stroke-width="2" stroke-linejoin="round"/><path d="M13.8 9V16M17.6 10.6V16M21.4 12.2V16" stroke="#000" stroke-width="1.6" fill="none"/></g>
</svg>
<div class="sb"><div class="blur">
<div class="cell g" style="left:8.5px;width:77px;">PLAY</div>
<div class="cell g" style="left:93.5px;width:98.5px;">ALERT</div>
<div class="cell " style="left:198.5px;width:99px;">1 : 484</div>
<div class="cell " style="left:303.5px;width:181px;">2;36;56.172 S</div>
<div class="cell " style="left:491.5px;width:200px;">80;11;33.603 W</div>
<div class="cell " style="left:697px;width:161px;">589745.92 E</div>
<div class="cell " style="left:863.5px;width:181px;">9710366.26 N</div>
<div class="cell " style="left:1049.5px;width:201px;">DIR 9739757.87</div>
<div class="cell " style="left:1257px;width:179px;">DIR (°) 192.49</div>
<div class="cell " style="left:1443.5px;width:104px;">Level 0</div>
</div><div class="abs" style="left:0;top:29px;width:2457px;height:2px;background:#101010"></div></div>
</div></body></html>
